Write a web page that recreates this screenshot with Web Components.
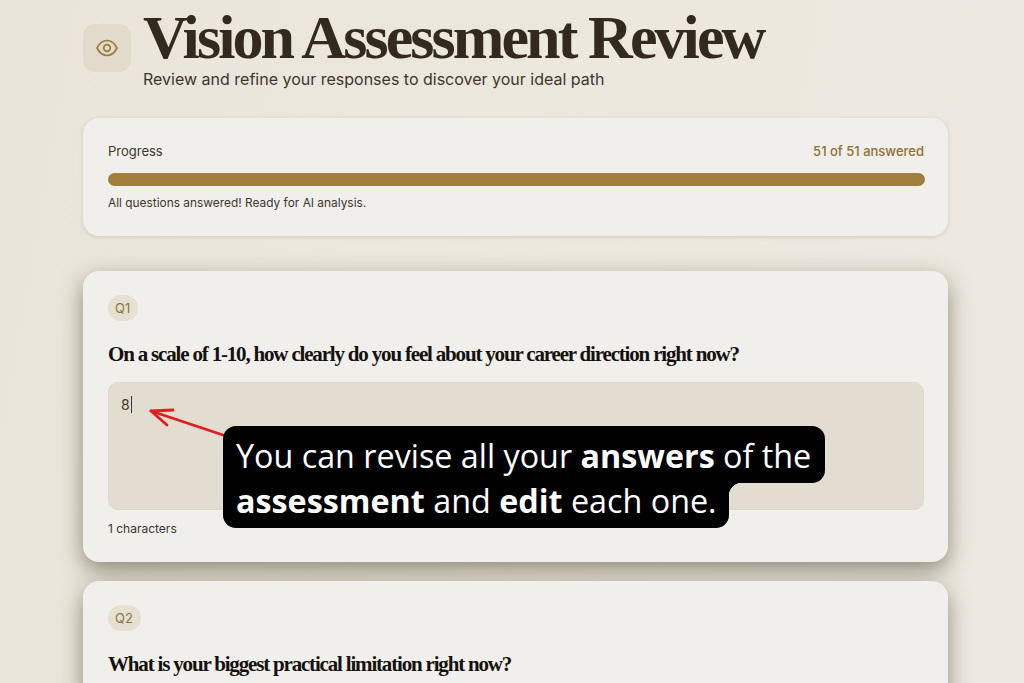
<!DOCTYPE html>
<html>
<head>
<meta charset="utf-8">
<title>Vision Assessment Review</title>
<style>
html, body { margin: 0; height: 683px; overflow: hidden; }
body { background: linear-gradient(100deg, #e9e5da 0%, #ece8de 55%, #ede9e0 100%); font-family: "Inter", "Liberation Sans", sans-serif; }
</style>
</head>
<body>
<review-page>
  <page-header slot="header" title-text="Vision Assessment Review" subtitle="Review and refine your responses to discover your ideal path"></page-header>
  <progress-card answered="51" total="51">All questions answered! Ready for AI analysis.</progress-card>
  <question-card num="Q1" question="On a scale of 1-10, how clearly do you feel about your career direction right now?" answer="8" count="1 characters" active></question-card>
  <question-card num="Q2" question="What is your biggest practical limitation right now?"></question-card>
</review-page>
<callout-note>
  <span slot="one">You can revise all your <b>answers</b> of the</span>
  <span slot="two"><b>assessment</b> and <b>edit</b> each one.</span>
</callout-note>

<script>
class ReviewPage extends HTMLElement {
    constructor(){
        super();
        this.attachShadow({ mode: 'open' });
        this.shadowRoot.innerHTML = `
            <style>
                :host { display: block; width: 865px; margin-left: 83px; padding-top: 8px; }
                #cards { display: flex; flex-direction: column; }
                ::slotted(progress-card) { margin-bottom: 35px; }
                ::slotted(question-card) { margin-bottom: 19px; }
            </style>
            <slot name="header"></slot>
            <section id="cards"><slot></slot></section>
        `;
    }
}
window.customElements.define('review-page', ReviewPage);

class PageHeader extends HTMLElement {
    constructor(){
        super();
        this.attachShadow({ mode: 'open' });
        this.shadowRoot.innerHTML = `
            <style>
                :host { display: flex; gap: 12px; height: 110px; }
                #icon {
                    width: 48px; height: 48px; margin-top: 16px; flex: none;
                    border-radius: 12px; background: #e2dbcc;
                    display: flex; align-items: center; justify-content: center;
                }
                h1 {
                    margin: 0; font: 700 62px/58px "Liberation Serif", serif;
                    letter-spacing: -2.9px; color: #33291e; white-space: nowrap;
                }
                p { margin: 3px 0 0; font-size: 16px; line-height: 20px; color: #3d362c; }
            </style>
            <div id="icon">
                <svg width="24" height="24" viewBox="0 0 24 24" fill="none" stroke="#9a7b3c" stroke-width="1.7" stroke-linecap="round" stroke-linejoin="round">
                    <path d="M2 12C4.500 7 8 4.500 12 4.500S19.500 7 22 12C19.500 17 16 19.500 12 19.500S4.500 17 2 12z"/>
                    <circle cx="12" cy="12" r="3.300"/>
                </svg>
            </div>
            <div>
                <h1>${this.getAttribute('title-text')}</h1>
                <p>${this.getAttribute('subtitle')}</p>
            </div>
        `;
    }
}
window.customElements.define('page-header', PageHeader);

class ProgressCard extends HTMLElement {
    constructor(){
        super();
        this.attachShadow({ mode: 'open' });
        this.shadowRoot.innerHTML = `
            <style>
                :host {
                    display: block; box-sizing: border-box; height: 118px; padding: 24px 23px 0 25px;
                    background: #f0efeb; border-radius: 16px;
                    box-shadow: 0 1px 4px rgba(90,75,50,.18);
                    font-size: 13px; color: #3d362c;
                }
                #top { display: flex; justify-content: space-between; line-height: 18px; }
                #count { color: #8f7130; font-weight: 500; margin-right: 1px; }
                #bar { height: 13px; margin-top: 13px; border-radius: 7px; background: #a07e3c; }
                #note { margin-top: 8px; font-size: 11.9px; line-height: 17px; }
            </style>
            <div id="top"><span>Progress</span><span id="count">${this.getAttribute('answered')} of ${this.getAttribute('total')} answered</span></div>
            <div id="bar"></div>
            <div id="note"><slot></slot></div>
        `;
    }
}
window.customElements.define('progress-card', ProgressCard);

class QuestionCard extends HTMLElement {
    constructor(){
        super();
        this.attachShadow({ mode: 'open' });
        const answer = this.getAttribute('answer') ?? '';
        this.shadowRoot.innerHTML = `
            <style>
                :host {
                    display: block; box-sizing: border-box; height: 291px; padding: 24px 24px 0 25px;
                    background: #f0efec; border-radius: 16px;
                    box-shadow: 0 8px 22px rgba(55,45,25,.5);
                }
                #badge {
                    display: inline-block; padding: 0 8px 0 7px; height: 26px; line-height: 26px;
                    border-radius: 13px; background: #e6e0d3; color: #8d7440; font-size: 13px;
                }
                h2 {
                    margin: 19px 0 0; font: 700 21px/28px "Liberation Serif", serif;
                    letter-spacing: -1.18px; color: #15120e; white-space: nowrap;
                }
                #answer {
                    box-sizing: border-box; height: 128px; margin-top: 14px; padding: 13px 12px;
                    background: #e3dcd0; border-radius: 10px; border: 1px solid #e0d9cb;
                    font-size: 14px; line-height: 18px; color: #3d362c;
                }
                #caret { display: inline-block; width: 1px; height: 17px; margin-left: 1px; background: #3d362c; vertical-align: -3px; }
                #count { margin-top: 10px; font-size: 12px; line-height: 17px; color: #3d362c; }
            </style>
            <span id="badge">${this.getAttribute('num')}</span>
            <h2>${this.getAttribute('question')}</h2>
            <div id="answer">${answer}${this.hasAttribute('active') ? '<span id="caret"></span>' : ''}</div>
            <div id="count">${this.getAttribute('count') ?? ''}</div>
        `;
    }
}
window.customElements.define('question-card', QuestionCard);

class CalloutNote extends HTMLElement {
    constructor(){
        super();
        this.attachShadow({ mode: 'open' });
        this.shadowRoot.innerHTML = `
            <style>
                :host {
                    position: absolute; left: 223px; top: 426px;
                    display: flex; flex-direction: column; align-items: flex-start;
                    font: 400 32.3px/45px "Open Sans", sans-serif; color: #fff; white-space: nowrap;
                }
                .line { background: #000; padding: 0 14px 0 13px; position: relative; }
                #one { height: 57px; line-height: 58px; border-radius: 13px 13px 13px 0; }
                #two { height: 45px; line-height: 35px; padding-right: 12px; border-radius: 0 0 13px 13px; }
                #two::after {
                    content: ''; position: absolute; left: 100%; top: 0; width: 13px; height: 13px;
                    background: radial-gradient(circle at 100% 100%, transparent 13px, #000 13.5px);
                }
                svg { position: absolute; left: -80px; top: -24px; overflow: visible; }
            </style>
            <svg width="80" height="40" viewBox="0 0 80 40" fill="none" stroke="#e01e1e" stroke-width="2.8" stroke-linecap="round" stroke-linejoin="round">
                <path d="M80 33 L8 9"/>
                <path d="M30 8 L8 9 L24 23"/>
            </svg>
            <div class="line" id="one"><slot name="one"></slot></div>
            <div class="line" id="two"><slot name="two"></slot></div>
        `;
    }
}
window.customElements.define('callout-note', CalloutNote);
</script>
</body>
</html>
